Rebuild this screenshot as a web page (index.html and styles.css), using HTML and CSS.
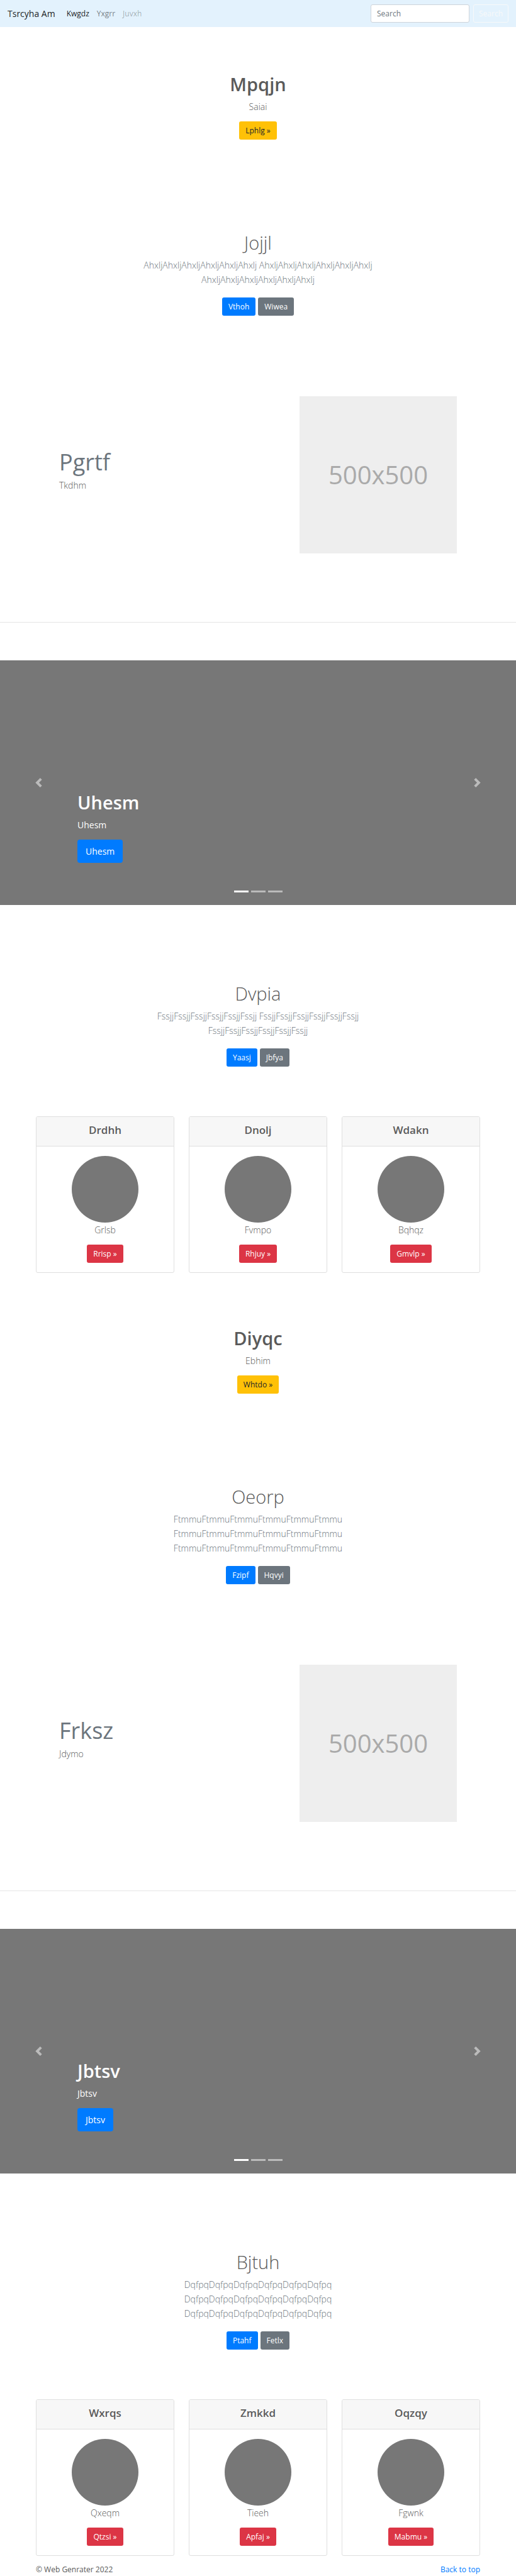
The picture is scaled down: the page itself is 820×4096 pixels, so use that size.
FILE: index.html
```html
<!DOCTYPE html>
<html lang="en">
<head>
<meta charset="utf-8">
<meta name="viewport" content="width=device-width, initial-scale=1">
<title>Tsrcyha Am</title>
<link rel="stylesheet" href="styles.css">
</head>
<body id="top">
<header class="navbar">
  <a class="brand" href="#top">Tsrcyha Am</a>
  <nav class="nav">
    <a class="nav-link active" href="#">Kwgdz</a>
    <a class="nav-link" href="#">Yxgrr</a>
    <a class="nav-link disabled" href="#">Juvxh</a>
  </nav>
  <form class="search">
    <input class="search-input" type="search" placeholder="Search" aria-label="Search">
    <button class="btn btn-outline" type="button">Search</button>
  </form>
</header>

<main>
  <section class="hero">
    <h1 class="title">Mpqjn</h1>
    <p class="lead">Saiai</p>
    <a class="btn btn-warning" href="#">Lphlg »</a>
  </section>

  <section class="intro">
    <h1 class="title light">Jojjl</h1>
    <p class="lead muted">AhxljAhxljAhxljAhxljAhxljAhxlj AhxljAhxljAhxljAhxljAhxljAhxlj AhxljAhxljAhxljAhxljAhxljAhxlj</p>
    <div class="actions">
      <a class="btn btn-primary" href="#">Vthoh</a>
      <a class="btn btn-secondary" href="#">Wiwea</a>
    </div>
  </section>

  <section class="feature">
    <div class="feature-text">
      <h2 class="feature-title">Pgrtf</h2>
      <p class="lead">Tkdhm</p>
    </div>
    <div class="placeholder">500x500</div>
  </section>
  <hr class="divider">

  <section class="carousel">
    <div class="caption">
      <h1 class="title">Uhesm</h1>
      <p class="caption-text">Uhesm</p>
      <a class="btn btn-primary btn-lg" href="#">Uhesm</a>
    </div>
    <button class="control prev" type="button" aria-label="Previous"><svg class="arrow" viewBox="0 0 8 8"><path d="M5.25 0l-4 4 4 4 1.5-1.5L4.25 4l2.5-2.5L5.25 0z"/></svg></button>
    <button class="control next" type="button" aria-label="Next"><svg class="arrow" viewBox="0 0 8 8"><path d="M2.75 0l-1.5 1.5L3.75 4l-2.5 2.5L2.75 8l4-4-4-4z"/></svg></button>
    <div class="indicators"><span class="dash current"></span><span class="dash"></span><span class="dash"></span></div>
  </section>

  <section class="intro after-carousel">
    <h1 class="title light">Dvpia</h1>
    <p class="lead muted">FssjjFssjjFssjjFssjjFssjjFssjj FssjjFssjjFssjjFssjjFssjjFssjj FssjjFssjjFssjjFssjjFssjjFssjj</p>
    <div class="actions">
      <a class="btn btn-primary" href="#">Yaasj</a>
      <a class="btn btn-secondary" href="#">Jbfya</a>
    </div>
  </section>

  <section class="cards">
    <article class="card">
      <h4 class="card-header">Drdhh</h4>
      <div class="card-body"><div class="circle"></div><p class="lead">Grlsb</p><a class="btn btn-danger" href="#">Rrisp »</a></div>
    </article>
    <article class="card">
      <h4 class="card-header">Dnolj</h4>
      <div class="card-body"><div class="circle"></div><p class="lead">Fvmpo</p><a class="btn btn-danger" href="#">Rhjuy »</a></div>
    </article>
    <article class="card">
      <h4 class="card-header">Wdakn</h4>
      <div class="card-body"><div class="circle"></div><p class="lead">Bqhqz</p><a class="btn btn-danger" href="#">Gmvlp »</a></div>
    </article>
  </section>

  <section class="hero after-cards">
    <h1 class="title">Diyqc</h1>
    <p class="lead">Ebhim</p>
    <a class="btn btn-warning" href="#">Whtdo »</a>
  </section>

  <section class="intro">
    <h1 class="title light">Oeorp</h1>
    <p class="lead muted">FtmmuFtmmuFtmmuFtmmuFtmmuFtmmu FtmmuFtmmuFtmmuFtmmuFtmmuFtmmu FtmmuFtmmuFtmmuFtmmuFtmmuFtmmu</p>
    <div class="actions">
      <a class="btn btn-primary" href="#">Fzipf</a>
      <a class="btn btn-secondary" href="#">Hqvyi</a>
    </div>
  </section>

  <section class="feature">
    <div class="feature-text">
      <h2 class="feature-title">Frksz</h2>
      <p class="lead">Jdymo</p>
    </div>
    <div class="placeholder">500x500</div>
  </section>
  <hr class="divider">

  <section class="carousel">
    <div class="caption">
      <h1 class="title">Jbtsv</h1>
      <p class="caption-text">Jbtsv</p>
      <a class="btn btn-primary btn-lg" href="#">Jbtsv</a>
    </div>
    <button class="control prev" type="button" aria-label="Previous"><svg class="arrow" viewBox="0 0 8 8"><path d="M5.25 0l-4 4 4 4 1.5-1.5L4.25 4l2.5-2.5L5.25 0z"/></svg></button>
    <button class="control next" type="button" aria-label="Next"><svg class="arrow" viewBox="0 0 8 8"><path d="M2.75 0l-1.5 1.5L3.75 4l-2.5 2.5L2.75 8l4-4-4-4z"/></svg></button>
    <div class="indicators"><span class="dash current"></span><span class="dash"></span><span class="dash"></span></div>
  </section>

  <section class="intro after-carousel">
    <h1 class="title light">Bjtuh</h1>
    <p class="lead muted">DqfpqDqfpqDqfpqDqfpqDqfpqDqfpq DqfpqDqfpqDqfpqDqfpqDqfpqDqfpq DqfpqDqfpqDqfpqDqfpqDqfpqDqfpq</p>
    <div class="actions">
      <a class="btn btn-primary" href="#">Ptahf</a>
      <a class="btn btn-secondary" href="#">Fetlx</a>
    </div>
  </section>

  <section class="cards">
    <article class="card">
      <h4 class="card-header">Wxrqs</h4>
      <div class="card-body"><div class="circle"></div><p class="lead">Qxeqm</p><a class="btn btn-danger" href="#">Qtzsi »</a></div>
    </article>
    <article class="card">
      <h4 class="card-header">Zmkkd</h4>
      <div class="card-body"><div class="circle"></div><p class="lead">Tieeh</p><a class="btn btn-danger" href="#">Apfaj »</a></div>
    </article>
    <article class="card">
      <h4 class="card-header">Oqzqy</h4>
      <div class="card-body"><div class="circle"></div><p class="lead">Fgwnk</p><a class="btn btn-danger" href="#">Mabmu »</a></div>
    </article>
  </section>
</main>

<footer class="footer">
  <span>© Web Genrater 2022</span>
  <a class="top-link" href="#top">Back to top</a>
</footer>
</body>
</html>
```
FILE: styles.css
```css
* { box-sizing: border-box; }

body {
  margin: 0;
  background: #fff;
  color: #5a5a5a;
  font: 400 12px/18px "Open Sans", "Noto Sans", sans-serif;
}

h1, h2, h4, p { margin: 0; }
a { text-decoration: none; }

/* Navbar */
.navbar {
  display: flex;
  align-items: center;
  height: 43px;
  padding: 0 12px;
  background: #e3f2fd;
}
.brand { margin-right: 12px; color: rgba(0, 0, 0, .9); font-size: 14px; line-height: 23px; }
.nav { display: flex; }
.nav-link { padding: 6px; color: rgba(0, 0, 0, .5); }
.nav-link.active { color: rgba(0, 0, 0, .9); }
.nav-link.disabled { color: rgba(0, 0, 0, .3); }
.search { display: flex; gap: 6px; margin-left: auto; }
.search-input {
  width: 157px;
  height: 29px;
  padding: 0 9px;
  border: 1px solid #ced4da;
  border-radius: 3px;
  background: #fff;
  color: #495057;
  font: inherit;
}
.search-input::placeholder { color: #6c757d; opacity: 1; }

/* Buttons */
.btn {
  display: inline-block;
  height: 29px;
  padding: 4px 9px;
  border: 1px solid transparent;
  border-radius: 3px;
  color: #fff;
  font: inherit;
  line-height: 19px;
  text-align: center;
}
.btn-outline { padding: 4px 8px; border-color: #f8f9fa; background: transparent; color: #f8f9fa; }
.btn-warning { background: #ffc107; color: #212529; }
.btn-primary { background: #007bff; }
.btn-secondary { background: #6c757d; }
.btn-danger { background: #dc3545; }
.btn-lg { height: 37px; padding: 6px 12px; border-radius: 4px; font-size: 14px; line-height: 23px; }

/* Text */
.title { font-size: 29px; font-weight: 600; line-height: 36px; margin-bottom: 6px; }
.title.light { font-weight: 300; }
.lead { font-size: 14px; font-weight: 300; line-height: 23px; margin-bottom: 12px; }
.lead.muted { color: #6c757d; }

/* Centred sections */
.hero, .intro {
  display: flex;
  flex-direction: column;
  align-items: center;
  padding: 0 12px;
  text-align: center;
}
.hero { padding-top: 73px; }
.hero.after-cards { padding-top: 86px; }
.intro { padding-top: 146px; }
.intro.after-carousel { padding-top: 123px; }
.intro .lead { max-width: 420px; margin-bottom: 17px; }
.actions { display: flex; gap: 4px; }

/* Feature row */
.feature {
  display: flex;
  align-items: center;
  justify-content: space-between;
  padding: 128px 94px 109px;
}
.feature-title { color: #6c757d; font-size: 36px; font-weight: 400; line-height: 38px; margin-bottom: 6px; }
.placeholder {
  display: flex;
  align-items: center;
  justify-content: center;
  width: 250px;
  aspect-ratio: 1;
  background: #eee;
  color: #aaa;
  font-size: 40px;
}
.divider { margin: 0 0 60px; border: 0; border-top: 1px solid #e5e5e5; }

/* Carousel */
.carousel {
  position: relative;
  display: flex;
  flex-direction: column;
  justify-content: flex-end;
  min-height: 389px;
  padding: 0 15% 67px;
  background: #777;
  color: #fff;
}
.caption-text { font-size: 14px; line-height: 23px; margin-bottom: 12px; }
.control {
  position: absolute;
  top: 0;
  bottom: 0;
  display: flex;
  align-items: center;
  justify-content: center;
  width: 15%;
  padding: 0;
  border: 0;
  background: none;
  opacity: .5;
}
.prev { left: 0; }
.next { right: 0; }
.arrow { width: 15px; height: 15px; fill: #fff; }
.indicators {
  position: absolute;
  right: 0;
  bottom: 20px;
  left: 0;
  display: flex;
  justify-content: center;
  gap: 4px;
}
.dash { width: 23px; height: 3px; background: #fff; opacity: .5; }
.dash.current { opacity: 1; }

/* Cards */
.cards {
  display: grid;
  grid-template-columns: repeat(3, 1fr);
  gap: 23px;
  padding: 79px 57px 0;
}
.card { border: 1px solid #dfdfdf; border-radius: 3px; overflow: hidden; text-align: center; }
.card-header {
  padding: 9px 15px 14px;
  border-bottom: 1px solid #dfdfdf;
  background: #f7f7f7;
  font-size: 17px;
  font-weight: 600;
  line-height: 23px;
}
.card-body { display: flex; flex-direction: column; align-items: center; padding: 15px; }
.circle { width: 106px; height: 106px; border-radius: 50%; background: #777; }

/* Footer */
.footer { display: flex; justify-content: space-between; padding: 13px 57px 0; }
.top-link { color: #007bff; }
```
